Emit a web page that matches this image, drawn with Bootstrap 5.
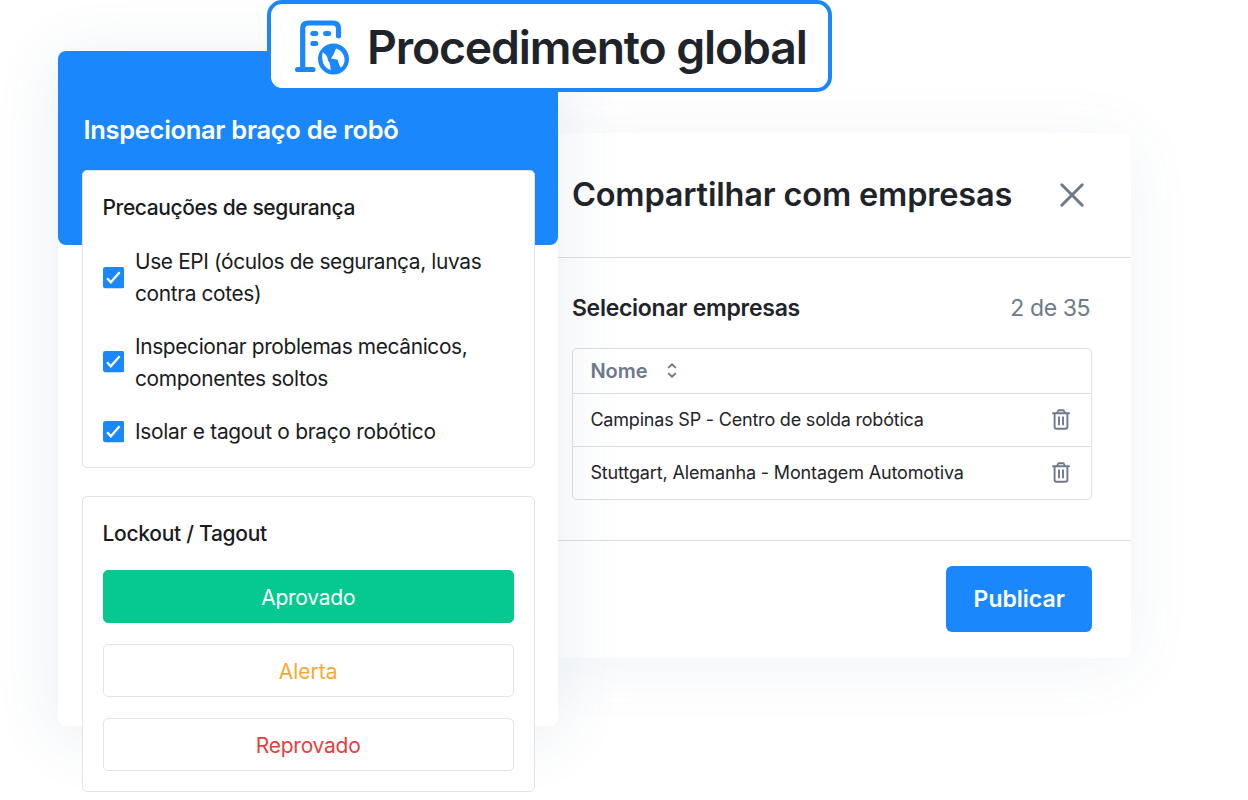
<!DOCTYPE html>
<html lang="pt-BR">
<head>
  <meta charset="UTF-8">
  <meta name="viewport" content="width=device-width, initial-scale=1.0">
  <title>Procedimento global</title>
  <link href="https://cdn.jsdelivr.net/npm/bootstrap@5.3.0/dist/css/bootstrap.min.css" rel="stylesheet">
  <style>
    body { font-family: Inter, "Liberation Sans", sans-serif; color: #1f242a; background: #fff; overflow: hidden; }
    .stage { width: 1248px; height: 800px; }
    .stage svg { flex-shrink: 0; display: block; }

    /* painel do procedimento */
    .proc-panel { width: 500.4px; height: 675px; margin: 51px 0 0 58px; border-radius: 8px; box-shadow: 0 8px 64px rgba(60, 100, 150, .12); }
    .proc-head { height: 194px; border-radius: 8px; background: #1a87fc; padding: 59px 25.5px 0; }
    .proc-title { font-size: 25.5px; line-height: 40px; font-weight: 600; letter-spacing: -.31px; }
    .proc-body { margin: -75px 23.5px 0; gap: 28px; }
    .step-card { border: 1.4px solid #e2e4e7; border-radius: 5px; padding: 21px 20px; color: #191b1e; }
    .step-card.checks { height: 298px; }
    .step-card.lockout { height: 296px; }
    .step-title { font-size: 21px; line-height: 32px; font-weight: 500; letter-spacing: -.39px; }
    .lockout .step-title { letter-spacing: -.28px; }
    .check-list { margin-top: 22px; gap: 21px; }
    .check-row { font-size: 20.9px; line-height: 32px; gap: 11px; letter-spacing: -.375px; }
    .check-row:last-child { letter-spacing: -.28px; }
    .check-row.lifted svg { margin-bottom: 2px; }
    .answers { margin-top: 20px; gap: 21px; }
    .answer, .answer:hover { height: 53px; border-radius: 5px; font-size: 21px; border: 1.4px solid #e2e4e7; padding: 2px 0 0; background: #fff; letter-spacing: -.24px; }
    .answer.ok { background: #05c98f; border-color: #05c98f; color: #fff; }
    .answer.warn { color: #f5a935; letter-spacing: 0; }
    .answer.fail { color: #e5403d; }

    /* painel de compartilhamento */
    .share-panel { width: 573px; height: 525px; margin-top: 133px; border-radius: 0 8px 8px 0; box-shadow: 0 8px 64px rgba(60, 100, 150, .08); }
    .share-head { height: 125px; padding: 0 46px 0 13.5px; border-bottom: 1.5px solid #dcdfe4; }
    .share-title { font-size: 32.5px; font-weight: 600; letter-spacing: -.17px; }
    .share-body { height: 283px; padding: 31px 39.2px 0 13.5px; border-bottom: 1.5px solid #dcdfe4; }
    .share-sub { font-size: 23px; line-height: 38px; letter-spacing: -.27px; }
    .share-count { letter-spacing: -.4px; margin-right: 2px; }
    .slate { color: #6c7a8a; }
    .org-list { margin-top: 21px; border: 1.4px solid #dcdfe4; border-radius: 5px; }
    .org-row { height: 53.3px; padding: 0 21px 1.5px 17.5px; font-size: 18px; border-top: 1.4px solid #dcdfe4; letter-spacing: -.2px; }
    .org-row svg { margin-top: 1px; }
    .org-row.org-last { height: 52.5px; letter-spacing: -.14px; }
    .org-row.org-head { height: 44px; padding-bottom: 0; font-size: 20px; font-weight: 600; border-top: 0; gap: 19.5px; letter-spacing: -.02px; }
    .org-row.org-head svg { margin-top: -1px; }
    .publish, .publish:hover { width: 146px; height: 66px; margin: 25px 39.2px 0 0; border-radius: 6px; background: #1a87fc; color: #fff; font-size: 23px; font-weight: 600; letter-spacing: 0; }

    /* etiqueta sobre os painéis */
    .global-tag { left: 267px; top: 0; width: 565px; height: 92px; border: 4px solid #1a87fc; border-radius: 15px; padding-left: 22px; }
    .tag-text { font-size: 46.3px; line-height: 60px; font-weight: 600; margin: 1px 0 0 16px; letter-spacing: -1.13px; white-space: nowrap; }
  </style>
</head>
<body>
  <!-- símbolos reutilizados -->
  <svg class="d-none">
    <symbol id="check" viewBox="0 0 22 22">
      <rect width="22" height="22" rx="2.5" fill="#1a87fc"/>
      <path d="M4.2 11.4 8 15.6 17 5.4" fill="none" stroke="#fff" stroke-width="2.3"/>
    </symbol>
    <symbol id="trash" viewBox="0 0 18 21">
      <g fill="none" stroke="#6c7a8a" stroke-width="1.9" stroke-linecap="round" stroke-linejoin="round">
        <path d="M1 4.2h16M2.6 4.3v13.4q0 2 2 2h8.8q2 0 2-2V4.3M5.1 3.9 5.9 2q.3-.8 1.2-.8h3.8q.9 0 1.2.8l.8 1.9"/>
        <path d="M7 8.2v7.4M11 8.2v7.4"/>
      </g>
    </symbol>
  </svg>

  <div class="stage position-relative d-flex align-items-start">
    <section class="proc-panel position-relative z-1 bg-white flex-shrink-0">
      <div class="proc-head text-white">
        <div class="proc-title">Inspecionar braço de robô</div>
      </div>
      <div class="proc-body d-flex flex-column">
        <div class="step-card checks bg-white">
          <div class="step-title">Precauções de segurança</div>
          <div class="check-list d-flex flex-column">
            <div class="check-row d-flex align-items-center">
              <svg width="21.5" height="21.5"><use href="#check"/></svg>
              <div>Use EPI (óculos de segurança, luvas<br>contra cotes)</div>
            </div>
            <div class="check-row lifted d-flex align-items-center">
              <svg width="21.5" height="21.5"><use href="#check"/></svg>
              <div>Inspecionar problemas mecânicos,<br>componentes soltos</div>
            </div>
            <div class="check-row d-flex align-items-center">
              <svg width="21.5" height="21.5"><use href="#check"/></svg>
              <div>Isolar e tagout o braço robótico</div>
            </div>
          </div>
        </div>
        <div class="step-card lockout bg-white">
          <div class="step-title">Lockout / Tagout</div>
          <div class="answers d-flex flex-column">
            <button type="button" class="answer ok btn w-100">Aprovado</button>
            <button type="button" class="answer warn btn w-100">Alerta</button>
            <button type="button" class="answer fail btn w-100">Reprovado</button>
          </div>
        </div>
      </div>
    </section>

    <section class="share-panel bg-white flex-shrink-0">
      <div class="share-head d-flex align-items-center justify-content-between">
        <div class="share-title">Compartilhar com empresas</div>
        <svg width="26" height="26" viewBox="0 0 26 26"><path d="M2.8 2.8l20.4 20.4M23.2 2.8L2.8 23.2" stroke="#6c7a8a" stroke-width="3" stroke-linecap="round"/></svg>
      </div>
      <div class="share-body">
        <div class="share-sub d-flex justify-content-between">
          <span class="fw-semibold">Selecionar empresas</span>
          <span class="share-count slate">2 de 35</span>
        </div>
        <div class="org-list">
          <div class="org-row org-head slate d-flex align-items-center">
            <span>Nome</span>
            <svg width="10" height="15" viewBox="0 0 10 15"><path d="M1.2 4.9 5 1.3l3.8 3.6M1.2 10.1 5 13.7l3.8-3.6" fill="none" stroke="#6c7a8a" stroke-width="1.9"/></svg>
          </div>
          <div class="org-row d-flex align-items-center justify-content-between">
            <span>Campinas SP - Centro de solda robótica</span>
            <svg width="18" height="21"><use href="#trash"/></svg>
          </div>
          <div class="org-row org-last d-flex align-items-center justify-content-between">
            <span>Stuttgart, Alemanha - Montagem Automotiva</span>
            <svg width="18" height="21"><use href="#trash"/></svg>
          </div>
        </div>
      </div>
      <div class="d-flex justify-content-end">
        <button type="button" class="publish btn">Publicar</button>
      </div>
    </section>

    <div class="global-tag position-absolute z-2 bg-white d-flex align-items-center">
      <svg width="58" height="58" viewBox="293 17 58 58">
        <g fill="none" stroke="#1a87fc" stroke-width="5.2" stroke-linecap="round">
          <path d="M302.7 69V28.500q0-5.500 5.500-5.500h24.800q5.500 0 5.500 5.500v7.300M297.600 69.500h15.300"/>
          <path d="M312.800 33.400h3M325.600 33.400h3M312.800 43.600h3" stroke-width="5"/>
        </g>
        <circle cx="333.500" cy="59" r="15.500" fill="#1a87fc"/>
        <path d="M322.700 52.300q5.200 3.200 5.200 8 2.800 3.600 2.800 9.700-5.600-1.800-7.700-7.300-1.900-5.300-.3-10.400z" fill="#fff"/>
        <path d="M336 48.600q5.100 1.400 7.500 6.500 2.500 5.800-.8 10.900-1.100 1.500-2.400 1.200-1.800-3.900-2.600-7.500l-6.700-1.100q3.200-4.500 5-10z" fill="#fff"/>
      </svg>
      <div class="tag-text">Procedimento global</div>
    </div>
  </div>

  <script src="https://cdn.jsdelivr.net/npm/bootstrap@5.3.0/dist/js/bootstrap.bundle.min.js"></script>
</body>
</html>
